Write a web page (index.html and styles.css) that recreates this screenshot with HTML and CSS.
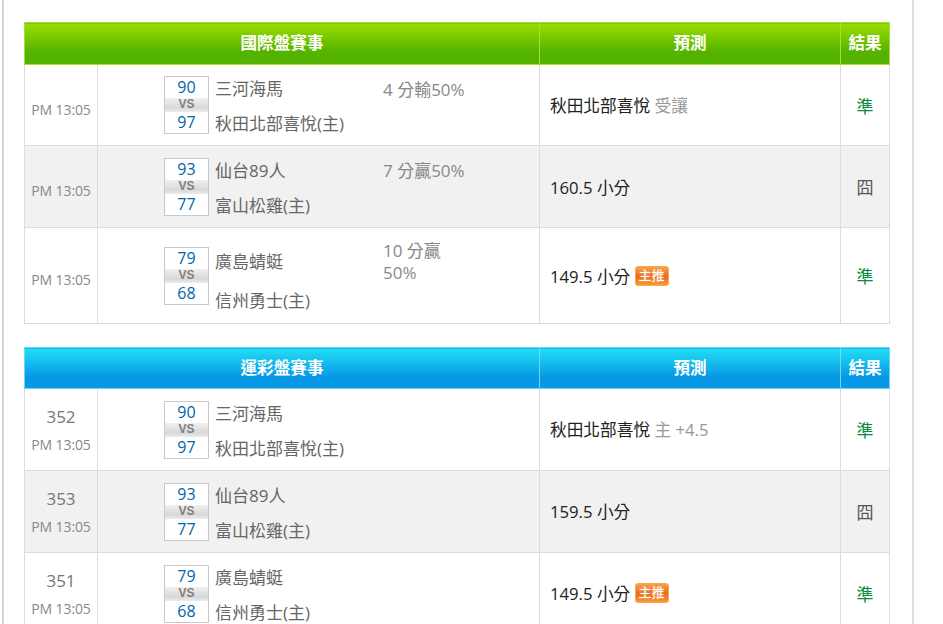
FILE: index.html
```html
<!DOCTYPE html>
<html lang="zh-Hant">
<head>
<meta charset="utf-8">
<title>賽事預測</title>
<link rel="stylesheet" href="styles.css">
</head>
<body>
<div class="panel">
  <table class="board board-green">
    <colgroup><col class="c-time"><col class="c-match"><col class="c-pred"><col class="c-res"></colgroup>
    <thead><tr><th colspan="2">國際盤賽事</th><th>預測</th><th>結果</th></tr></thead>
    <tbody>
      <tr class="r81">
        <td class="time"><div class="clock clock-low">PM 13:05</div></td>
        <td><div class="match">
          <div class="score"><div class="num">90</div><div class="vs">VS</div><div class="num">97</div></div>
          <div class="teams"><div>三河海馬</div><div>秋田北部喜悅(主)</div></div>
          <div class="line">4 分輸50%</div>
        </div></td>
        <td class="pred">秋田北部喜悅 <span class="dim">受讓</span></td>
        <td class="res win">準</td>
      </tr>
      <tr class="r82 alt">
        <td class="time"><div class="clock clock-low">PM 13:05</div></td>
        <td><div class="match">
          <div class="score"><div class="num">93</div><div class="vs">VS</div><div class="num">77</div></div>
          <div class="teams"><div>仙台89人</div><div>富山松雞(主)</div></div>
          <div class="line">7 分贏50%</div>
        </div></td>
        <td class="pred">160.5 小分</td>
        <td class="res">囧</td>
      </tr>
      <tr class="r96">
        <td class="time"><div class="clock clock-low">PM 13:05</div></td>
        <td><div class="match">
          <div class="score"><div class="num">79</div><div class="vs">VS</div><div class="num">68</div></div>
          <div class="teams teams-wide"><div>廣島蜻蜓</div><div>信州勇士(主)</div></div>
          <div class="line line-wrap">10 分贏 50%</div>
        </div></td>
        <td class="pred">149.5 小分 <span class="tag">主推</span></td>
        <td class="res win">準</td>
      </tr>
    </tbody>
  </table>
  <table class="board board-blue">
    <colgroup><col class="c-time"><col class="c-match"><col class="c-pred"><col class="c-res"></colgroup>
    <thead><tr><th colspan="2">運彩盤賽事</th><th>預測</th><th>結果</th></tr></thead>
    <tbody>
      <tr class="r82">
        <td class="time"><div class="code">352</div><div class="clock">PM 13:05</div></td>
        <td><div class="match">
          <div class="score"><div class="num">90</div><div class="vs">VS</div><div class="num">97</div></div>
          <div class="teams"><div>三河海馬</div><div>秋田北部喜悅(主)</div></div>
        </div></td>
        <td class="pred">秋田北部喜悅 <span class="dim">主 +4.5</span></td>
        <td class="res win">準</td>
      </tr>
      <tr class="r82 alt">
        <td class="time"><div class="code">353</div><div class="clock">PM 13:05</div></td>
        <td><div class="match">
          <div class="score"><div class="num">93</div><div class="vs">VS</div><div class="num">77</div></div>
          <div class="teams"><div>仙台89人</div><div>富山松雞(主)</div></div>
        </div></td>
        <td class="pred">159.5 小分</td>
        <td class="res">囧</td>
      </tr>
      <tr class="r82">
        <td class="time"><div class="code">351</div><div class="clock">PM 13:05</div></td>
        <td><div class="match">
          <div class="score"><div class="num">79</div><div class="vs">VS</div><div class="num">68</div></div>
          <div class="teams"><div>廣島蜻蜓</div><div>信州勇士(主)</div></div>
        </div></td>
        <td class="pred">149.5 小分 <span class="tag">主推</span></td>
        <td class="res win">準</td>
      </tr>
    </tbody>
  </table>
</div>
</body>
</html>
```
FILE: styles.css
```css
html, body {
  margin: 0;
  height: 624px;
  overflow: hidden;
  background: #fff;
  font-family: "Open Sans", "Noto Sans CJK TC", sans-serif;
}
.panel {
  box-sizing: border-box;
  width: 912px;
  height: 624px;
  margin-left: 2px;
  padding: 22px 0 0 20px;
  border-left: 2px solid #d4d4d4;
  border-right: 2px solid #dcdcdc;
  overflow: hidden;
}
.board {
  width: 865px;
  table-layout: fixed;
  border-collapse: collapse;
  margin-bottom: 23px;
  font-size: 17px;
  color: #666;
}
.c-time { width: 73px; }
.c-match { width: 442px; }
.c-pred { width: 301px; }
.c-res { width: 49px; }
th {
  height: 42px;
  padding: 0 0 3px;
  box-sizing: border-box;
  color: #fff;
  font-size: 16.6px;
  font-weight: 700;
  text-align: center;
}
.board-green th {
  background: linear-gradient(#9ade00 0, #54b200 70%);
  border: 1px solid #a6dc3c;
}
.board-blue th {
  height: 41px;
  background: linear-gradient(#22def4 0, #0899e6 70%);
  border: 1px solid #6fd6f2;
}
td {
  padding: 0;
  border: 1px solid #dcdcdc;
  vertical-align: middle;
}
.r81 { height: 81px; }
.r82 { height: 82px; }
.r96 { height: 96px; }
.alt td { background: #f1f1f1; }
.time { text-align: center; color: #888; }
.clock { font-size: 14px; line-height: 20px; letter-spacing: -.1px; }
.clock-low { margin-top: 9px; }
.code { font-size: 17px; line-height: 24px; margin-bottom: 6px; color: #777; }
.match {
  display: flex;
  align-items: center;
  padding-left: 66px;
}
.score {
  box-sizing: border-box;
  flex: none;
  width: 45px;
  height: 58px;
  border: 1px solid #c8c8c8;
  background: #fff;
  text-align: center;
  color: #06a;
  font-size: 16px;
}
.num { height: 21px; line-height: 21px; }
.vs {
  height: 14px;
  line-height: 13px;
  font-family: "Liberation Sans", sans-serif;
  font-size: 12px;
  font-weight: 700;
  color: #808080;
  background: linear-gradient(#f0f0f0, #d8d8d8 70%, #ececec);
}
.teams {
  flex: none;
  width: 168px;
  margin: 2px 0 0 6px;
  display: flex;
  flex-direction: column;
  gap: 12px;
  line-height: 23px;
  color: #666;
}
.teams-wide { gap: 16px; margin-top: 11px; }
.line { width: 90px; line-height: 22px; margin-bottom: 31px; color: #888; }
.line-wrap { margin-bottom: 28px; }
.pred { padding: 0 0 0 10px; color: #222; font-size: 16.7px; }
.board-blue .pred { padding-bottom: 2px; }
.dim { color: #999; }
.res { text-align: center; color: #555; }
.win { color: #0a8a3a; }
.tag {
  display: inline-block;
  box-sizing: border-box;
  width: 34px;
  height: 20px;
  line-height: 17px;
  margin-left: 0;
  vertical-align: 3px;
  border: 1px solid #f7a94f;
  border-radius: 3px;
  text-align: center;
  font-size: 13px;
  color: #fff;
  text-shadow: 0 0 2px rgba(255,255,255,.6);
  background: linear-gradient(#f8a04a, #e8691c 55%, #fb9a30);
}
```
